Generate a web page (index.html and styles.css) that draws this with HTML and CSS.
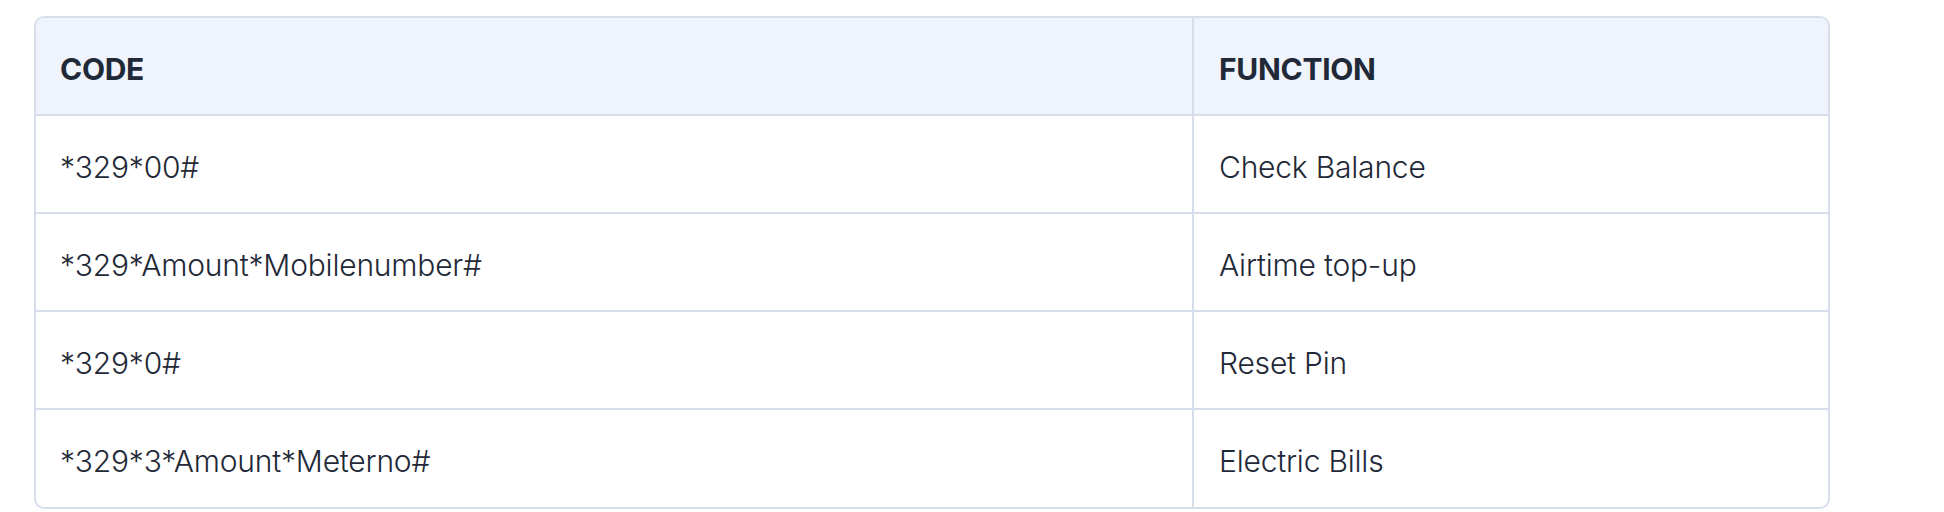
FILE: index.html
```html
<!DOCTYPE html>
<html lang="en">
<head>
<meta charset="utf-8">
<title>USSD Codes</title>
<link rel="stylesheet" href="styles.css">
</head>
<body>
<div class="page">
  <div class="table-wrap">
    <table class="codes">
      <thead>
        <tr><th class="col-code">CODE</th><th>FUNCTION</th></tr>
      </thead>
      <tbody>
        <tr><td>*329*00#</td><td>Check Balance</td></tr>
        <tr><td>*329*Amount*Mobilenumber#</td><td>Airtime top-up</td></tr>
        <tr><td>*329*0#</td><td>Reset Pin</td></tr>
        <tr><td>*329*3*Amount*Meterno#</td><td>Electric Bills</td></tr>
      </tbody>
    </table>
  </div>
</div>
</body>
</html>
```

FILE: styles.css
```css
html, body {
  margin: 0;
  padding: 0;
  background: #ffffff;
}
.page {
  padding: 16px 0 0 34px;
  width: 1796px;
}
.table-wrap {
  border: 2px solid #d6deeb;
  border-radius: 10px;
  overflow: hidden;
}
.codes {
  width: 100%;
  border-collapse: collapse;
  font-family: Inter, "Noto Sans", sans-serif;
  color: #1f2937;
}
.codes th {
  height: 97px;
}
.codes td {
  height: 98px;
}
.codes th, .codes td {
  padding: 5px 0 0 25px;
  text-align: left;
  box-sizing: border-box;
}
.codes th {
  background: #eff3fb;
  font-weight: 700;
  font-size: 30px;
  letter-spacing: -0.3px;
  color: #1f2937;
  border-bottom: 2px solid #d6deeb;
}
.codes td {
  font-weight: 300;
  font-size: 30px;
  letter-spacing: -0.2px;
  border-bottom: 2px solid #d6deeb;
}
.codes tbody tr:last-child td {
  border-bottom: none;
}
.codes th:first-child, .codes td:first-child {
  width: 1157px;
  padding-left: 24px;
  border-right: 2px solid #d6deeb;
}
```
